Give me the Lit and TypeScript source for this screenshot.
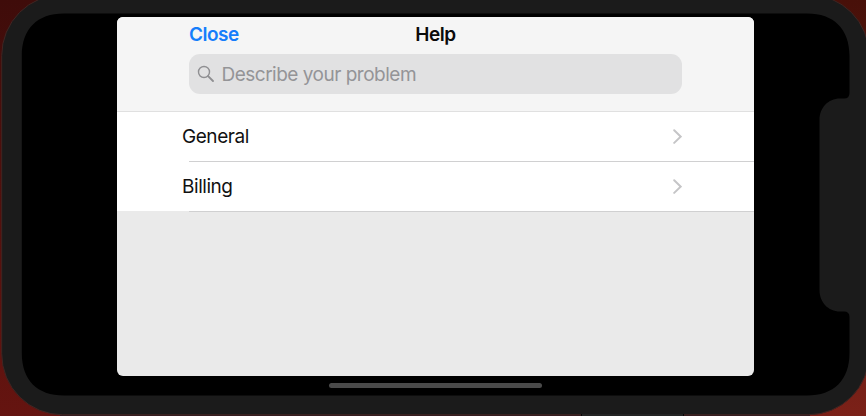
import { LitElement, html, css } from "lit";
import { customElement, property } from "lit/decorators.js";

@customElement("help-row")
class HelpRow extends LitElement {
  @property() label = "";

  static styles = css`
    :host { display: block; height: 50px; }
    .row {
      box-sizing: border-box; height: 50px; margin-left: 72px; padding: 0 72px 1px 0;
      border-bottom: 1px solid #d0d0d1;
      display: flex; align-items: center; justify-content: space-between;
    }
    .label { margin-left: -7px; padding-top: 2px; font-size: 19px; line-height: 24px; color: #111; letter-spacing: -0.45px; }
    svg { display: block; }
  `;

  render() {
    return html`<div class="row">
      <span class="label">${this.label}</span>
      <svg width="10" height="16" viewBox="0 0 10 16" fill="none" stroke="#c5c5c7" stroke-width="2">
        <path d="M2.2 2.3 8.6 8.6 2.2 14.9" stroke-linecap="round" />
      </svg>
    </div>`;
  }
}

@customElement("app-root")
class AppRoot extends LitElement {
  static styles = css`
    :host {
      display: block; position: relative; width: 866px; height: 416px; overflow: hidden;
      font-family: Inter, "Liberation Sans", sans-serif;
    }
    .device { position: absolute; inset: 0; display: block; }
    .stage { position: relative; display: flex; flex-direction: column; height: 416px; padding: 17px 112px 0 117px; box-sizing: border-box; }
    .sheet { height: 359px; flex: none; border-radius: 6px; overflow: hidden; background: #eaeaea; }
    .header {
      box-sizing: border-box; height: 95px; padding: 4px 72px 0; background: #f5f5f5;
      border-bottom: 1px solid #e0e0e0;
    }
    .nav { display: grid; grid-template-columns: 1fr auto 1fr; height: 33px; line-height: 28px; font-size: 19px; font-weight: 600; }
    .close { color: #157efb; letter-spacing: -0.5px; }
    .title { color: #0b0b0b; letter-spacing: -0.4px; }
    .search {
      box-sizing: border-box; height: 40px; border-radius: 11px; background: #e1e1e2; color: #949497;
      display: flex; align-items: center; gap: 6.5px; padding: 0 8px; font-size: 19px; letter-spacing: -0.5px;
    }
    .list { background: linear-gradient(#fff 99px, #eaeaea 99px); }
    .home { width: 213px; height: 5px; border-radius: 3px; background: #4a4a4a; margin: 7px 0 0 212px; flex: none; }
  `;

  render() {
    return html`
      <svg class="device" width="866" height="416" viewBox="0 0 866 416">
        <defs>
          <linearGradient id="wall" x1="0" y1="0" x2="0" y2="1">
            <stop offset="0" stop-color="#3f0c0a" />
            <stop offset="1" stop-color="#651410" />
          </linearGradient>
          <linearGradient id="wallRight" x1="0" y1="0" x2="0" y2="1">
            <stop offset="0" stop-color="#481009" />
            <stop offset="1" stop-color="#7b2118" />
          </linearGradient>
        </defs>
        <rect width="433" height="416" fill="url(#wall)" />
        <rect x="433" width="433" height="416" fill="url(#wallRight)" />
        <rect x="60" y="414" width="750" height="2" fill="#321a20" />
        <rect x="1.7" y="-5.5" width="867.5" height="420.3" rx="61" fill="#1b1b1b" stroke="#422522" stroke-width="1" />
        <path d="M581 414H683V416H581z" fill="#242424" />
        <path d="M581 414h1v2h-1zM683 414h1v2h-1z" fill="#080808" />
        <path
          d="M64 13.5H807C834 13.5 849.5 29 849.5 56V93Q849.5 98.5 844 98.5H840C828 98.5 819.5 108 819.5 120V290C819.5 302 828 311.5 840 311.5H844Q849.5 311.5 849.5 317V353C849.5 380 834 395.5 807 395.5H64C37 395.5 21.8 380 21.8 353V56C21.8 29 37 13.5 64 13.5Z"
          fill="#000"
        />
      </svg>
      <div class="stage">
        <div class="sheet">
          <div class="header">
            <div class="nav">
              <span class="close">Close</span>
              <span class="title">Help</span>
            </div>
            <div class="search">
              <svg width="18" height="18" viewBox="0 0 18 18" fill="none" stroke="#8f8f92" stroke-width="1.4">
                <circle cx="7" cy="7" r="5.5" />
                <path d="M11.1 11.1 16 16" stroke-width="1.9" stroke-linecap="round" />
              </svg>
              <span>Describe your problem</span>
            </div>
          </div>
          <div class="list">
            <help-row label="General"></help-row>
            <help-row label="Billing"></help-row>
          </div>
        </div>
        <div class="home"></div>
      </div>
    `;
  }
}
